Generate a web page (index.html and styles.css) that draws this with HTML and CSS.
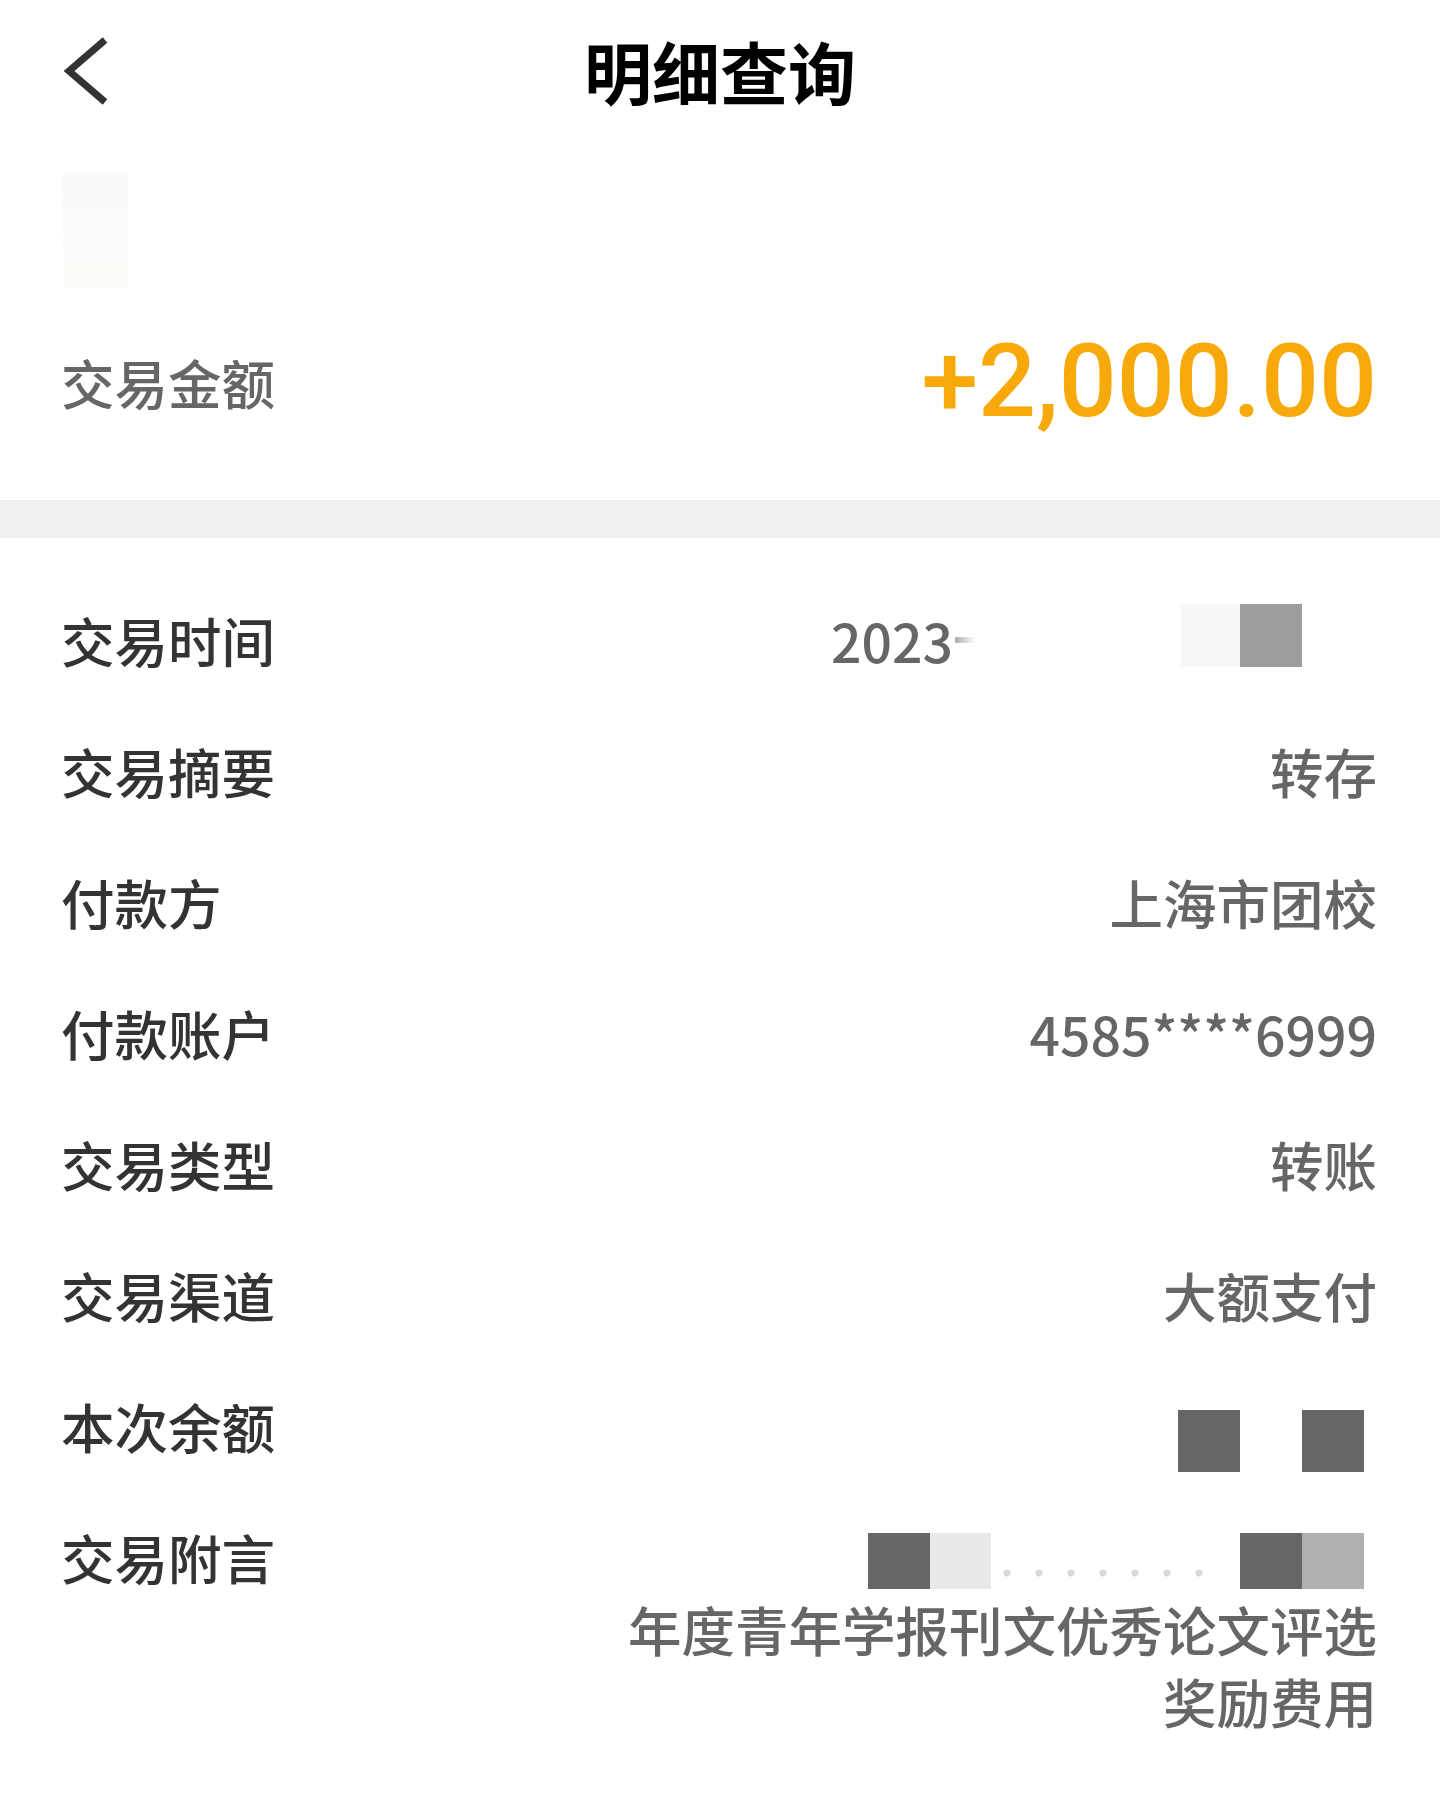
FILE: index.html
```html
<!DOCTYPE html>
<html lang="zh-CN">
<head>
  <meta charset="UTF-8">
  <title>明细查询</title>
  <link rel="stylesheet" href="styles.css">
</head>
<body>
  <!-- 顶部导航 -->
  <header class="nav">
    <a class="nav__back" href="#" aria-label="返回">
      <svg width="46" height="70" viewBox="0 0 46 70">
        <polyline points="42,4 6,35 42,66" fill="none" stroke="#333" stroke-width="7"/>
      </svg>
    </a>
    <h1 class="nav__title">明细查询</h1>
    <span></span>
  </header>

  <!-- 金额 -->
  <section class="hero">
    <div class="hero__ghost"></div>
    <div class="hero__amount">
      <span class="hero__label">交易金额</span>
      <span class="hero__value">+2,000.00</span>
    </div>
  </section>

  <div class="divider"></div>

  <!-- 明细列表 -->
  <div class="details">
    <div class="row">
      <span class="row__label">交易时间</span>
      <span class="row__value row__value--masked">
        <span>2023</span><i class="dash"></i><i class="gap gap--time"></i><i class="mask mask--ghost mask--up"></i><i class="mask mask--mid mask--up"></i><i class="gap gap--time-end"></i>
      </span>
    </div>
    <div class="row">
      <span class="row__label">交易摘要</span>
      <span class="row__value">转存</span>
    </div>
    <div class="row">
      <span class="row__label">付款方</span>
      <span class="row__value">上海市团校</span>
    </div>
    <div class="row">
      <span class="row__label">付款账户</span>
      <span class="row__value">4585****6999</span>
    </div>
    <div class="row">
      <span class="row__label">交易类型</span>
      <span class="row__value">转账</span>
    </div>
    <div class="row">
      <span class="row__label">交易渠道</span>
      <span class="row__value">大额支付</span>
    </div>
    <div class="row">
      <span class="row__label">本次余额</span>
      <span class="row__value row__value--masked">
        <i class="mask mask--dark mask--down"></i><i class="gap gap--block"></i><i class="mask mask--dark mask--down"></i><i class="gap gap--end"></i>
      </span>
    </div>
    <div class="row">
      <span class="row__label">交易附言</span>
      <div class="row__value row__value--note">
        <div class="note-mask">
          <i class="mask mask--dark mask--note"></i><i class="mask mask--light mask--note"></i><i class="dots"></i><i class="gap gap--note"></i><i class="mask mask--dark mask--note"></i><i class="mask mask--soft mask--note"></i><i class="gap gap--end"></i>
        </div>
        <span>年度青年学报刊文优秀论文评选</span>
        <span>奖励费用</span>
      </div>
    </div>
  </div>
</body>
</html>
```

FILE: styles.css
```css
body {
  margin: 0;
  background: #fff;
  font-family: "Noto Sans CJK SC", "Noto Sans", sans-serif;
  color: #333;
}

/* 顶部导航 */
.nav {
  display: grid;
  grid-template-columns: 1fr auto 1fr;
  align-items: center;
  height: 142px;
  padding: 0 63px 6px;
}

.nav__back {
  display: flex;
  align-items: center;
}

.nav__title {
  margin: 0;
  font-size: 68px;
  font-weight: 700;
  line-height: 1;
  color: #000;
}

/* 金额区域 */
.hero {
  padding: 27px 63px 55px 61px;
}

.hero__ghost {
  width: 65px;
  height: 112px;
  margin-left: 2px;
  background: linear-gradient(#f8fafc, #fcfbf8);
}

.hero__amount {
  display: flex;
  justify-content: space-between;
  align-items: center;
  height: 128px;
  margin-top: 30px;
}

.hero__label {
  font-size: 53.5px;
  font-weight: 500;
  color: #666;
}

.hero__value {
  font-family: Roboto, "Liberation Sans", sans-serif;
  font-size: 102px;
  font-weight: 500;
  line-height: 1;
  color: #f7a90a;
}

.divider {
  height: 38px;
  background: #f0f0f0;
}

/* 明细列表 */
.details {
  padding-top: 36.5px;
}

.row {
  display: flex;
  justify-content: space-between;
  align-items: flex-start;
  padding: 29.5px 63px 29.5px 61px;
  font-size: 53.5px;
  font-weight: 500;
  line-height: 72px;
}

.row__label {
  color: #333;
  white-space: nowrap;
}

.row__value {
  color: #666;
  text-align: right;
}

.row__value--masked {
  display: flex;
  align-items: center;
  height: 72px;
}

.row__value--note {
  display: flex;
  flex-direction: column;
  align-items: flex-end;
}

.note-mask {
  display: flex;
  align-items: center;
  height: 72px;
  padding-top: 8px;
  box-sizing: border-box;
}

.dash {
  width: 20px;
  height: 6px;
  margin-left: 2px;
  background: linear-gradient(to right, #aaa, rgba(255, 255, 255, 0));
}

.gap {
  display: block;
  height: 1px;
}

.gap--time { width: 206px; }
.gap--time-end { width: 75px; }
.gap--block { width: 62px; }
.gap--end { width: 13px; }
.gap--note { width: 25px; }

.mask {
  display: block;
  width: 62px;
  height: 62px;
}

.mask--up {
  height: 63px;
  margin-bottom: 9px;
}

.mask--down {
  margin-top: 30px;
}

.mask--note {
  height: 56px;
}

.mask--dark { background: #666; }
.mask--mid { background: #9d9d9d; }
.mask--light { background: #e9e9e9; width: 61px; }
.mask--soft { background: #b0b0b0; }
.mask--ghost { background: #f7f7f7; width: 59px; }

.dots {
  display: block;
  width: 224px;
  height: 10px;
  margin-top: 24px;
  background: radial-gradient(circle, #d8d8d8 3px, rgba(255, 255, 255, 0) 4px) 0 0 / 32px 10px repeat-x;
}
```
